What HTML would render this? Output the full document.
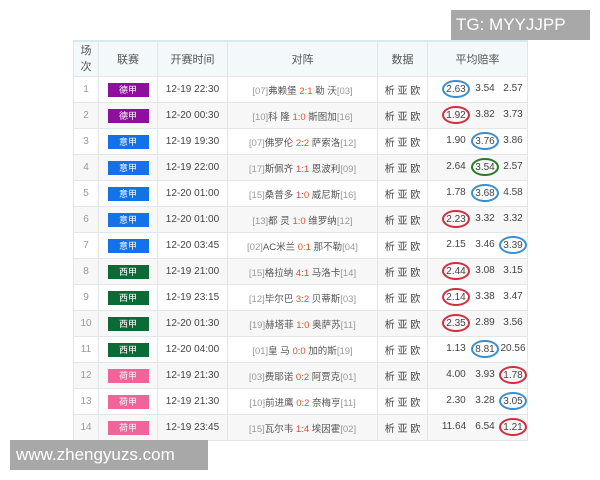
<!DOCTYPE html>
<html><head><meta charset="utf-8"><style>
body{margin:0;width:600px;height:480px;background:#fff;position:relative;overflow:hidden;font-family:"Liberation Sans","Noto Sans CJK SC",sans-serif;}
table{position:absolute;left:73px;top:40px;width:454px;border-collapse:collapse;table-layout:fixed;font-size:10px;color:#444;}
td,th{border:1px solid #e3e6e8;text-align:center;padding:0;height:25px;white-space:nowrap;overflow:hidden}
th{height:34px;background:#f3f8fb;font-weight:normal;font-size:11px;color:#555;border-top:2px solid #d8eaf0}
tr:nth-child(odd) td{background:#f7f7f7}
td.n{color:#999}
.b{display:inline-block;width:41px;height:14px;line-height:14px;color:#fff;font-size:9px}
.de{background:#8e0e9e}.yi{background:#1472e8}.xi{background:#0a6b36}.he{background:#f0649a}
.m{color:#555;font-size:9.5px}.m i{font-style:normal;color:#999}.m b{font-weight:normal;color:#e0502c}
.o{position:relative}
.o span{position:absolute;top:6px;width:30px;margin-left:-15px;text-align:center;font-size:10px;color:#444}
.o span.c{box-sizing:border-box;height:18px;top:3px;line-height:15px;border:2px solid;border-radius:50%;width:28px;margin-left:-14px}
.bl{border-color:#3a8fd0!important}.rd{border-color:#d03040!important}.gr{border-color:#2a7a2a!important}
.wm{position:absolute;background:#a8a8a8;color:#fff;font-size:17px}
</style></head><body>
<table>
<colgroup><col style="width:25px"><col style="width:59px"><col style="width:70px"><col style="width:150px"><col style="width:50px"><col style="width:100px"></colgroup>
<tr><th style="line-height:16px">场<br>次</th><th>联赛</th><th>开赛时间</th><th>对阵</th><th>数据</th><th>平均赔率</th></tr>
<tr><td class="n">1</td><td><span class="b de">德甲</span></td><td>12-19 22:30</td><td class="m"><i>[07]</i>弗赖堡 <b>2:1</b> 勒 沃<i>[03]</i></td><td>析 亚 欧</td><td class="o"><span class="c bl" style="left:28px">2.63</span><span style="left:57px">3.54</span><span style="left:85px">2.57</span></td></tr>
<tr><td class="n">2</td><td><span class="b de">德甲</span></td><td>12-20 00:30</td><td class="m"><i>[10]</i>科 隆 <b>1:0</b> 斯图加<i>[16]</i></td><td>析 亚 欧</td><td class="o"><span class="c rd" style="left:28px">1.92</span><span style="left:57px">3.82</span><span style="left:85px">3.73</span></td></tr>
<tr><td class="n">3</td><td><span class="b yi">意甲</span></td><td>12-19 19:30</td><td class="m"><i>[07]</i>佛罗伦 <b>2:2</b> 萨索洛<i>[12]</i></td><td>析 亚 欧</td><td class="o"><span style="left:28px">1.90</span><span class="c bl" style="left:57px">3.76</span><span style="left:85px">3.86</span></td></tr>
<tr><td class="n">4</td><td><span class="b yi">意甲</span></td><td>12-19 22:00</td><td class="m"><i>[17]</i>斯佩齐 <b>1:1</b> 恩波利<i>[09]</i></td><td>析 亚 欧</td><td class="o"><span style="left:28px">2.64</span><span class="c gr" style="left:57px">3.54</span><span style="left:85px">2.57</span></td></tr>
<tr><td class="n">5</td><td><span class="b yi">意甲</span></td><td>12-20 01:00</td><td class="m"><i>[15]</i>桑普多 <b>1:0</b> 威尼斯<i>[16]</i></td><td>析 亚 欧</td><td class="o"><span style="left:28px">1.78</span><span class="c bl" style="left:57px">3.68</span><span style="left:85px">4.58</span></td></tr>
<tr><td class="n">6</td><td><span class="b yi">意甲</span></td><td>12-20 01:00</td><td class="m"><i>[13]</i>都 灵 <b>1:0</b> 维罗纳<i>[12]</i></td><td>析 亚 欧</td><td class="o"><span class="c rd" style="left:28px">2.23</span><span style="left:57px">3.32</span><span style="left:85px">3.32</span></td></tr>
<tr><td class="n">7</td><td><span class="b yi">意甲</span></td><td>12-20 03:45</td><td class="m"><i>[02]</i>AC米兰 <b>0:1</b> 那不勒<i>[04]</i></td><td>析 亚 欧</td><td class="o"><span style="left:28px">2.15</span><span style="left:57px">3.46</span><span class="c bl" style="left:85px">3.39</span></td></tr>
<tr><td class="n">8</td><td><span class="b xi">西甲</span></td><td>12-19 21:00</td><td class="m"><i>[15]</i>格拉纳 <b>4:1</b> 马洛卡<i>[14]</i></td><td>析 亚 欧</td><td class="o"><span class="c rd" style="left:28px">2.44</span><span style="left:57px">3.08</span><span style="left:85px">3.15</span></td></tr>
<tr><td class="n">9</td><td><span class="b xi">西甲</span></td><td>12-19 23:15</td><td class="m"><i>[12]</i>毕尔巴 <b>3:2</b> 贝蒂斯<i>[03]</i></td><td>析 亚 欧</td><td class="o"><span class="c rd" style="left:28px">2.14</span><span style="left:57px">3.38</span><span style="left:85px">3.47</span></td></tr>
<tr><td class="n">10</td><td><span class="b xi">西甲</span></td><td>12-20 01:30</td><td class="m"><i>[19]</i>赫塔菲 <b>1:0</b> 奥萨苏<i>[11]</i></td><td>析 亚 欧</td><td class="o"><span class="c rd" style="left:28px">2.35</span><span style="left:57px">2.89</span><span style="left:85px">3.56</span></td></tr>
<tr><td class="n">11</td><td><span class="b xi">西甲</span></td><td>12-20 04:00</td><td class="m"><i>[01]</i>皇 马 <b>0:0</b> 加的斯<i>[19]</i></td><td>析 亚 欧</td><td class="o"><span style="left:28px">1.13</span><span class="c bl" style="left:57px">8.81</span><span style="left:85px">20.56</span></td></tr>
<tr><td class="n">12</td><td><span class="b he">荷甲</span></td><td>12-19 21:30</td><td class="m"><i>[03]</i>费耶诺 <b>0:2</b> 阿贾克<i>[01]</i></td><td>析 亚 欧</td><td class="o"><span style="left:28px">4.00</span><span style="left:57px">3.93</span><span class="c rd" style="left:85px">1.78</span></td></tr>
<tr><td class="n">13</td><td><span class="b he">荷甲</span></td><td>12-19 21:30</td><td class="m"><i>[10]</i>前进鹰 <b>0:2</b> 奈梅亨<i>[11]</i></td><td>析 亚 欧</td><td class="o"><span style="left:28px">2.30</span><span style="left:57px">3.28</span><span class="c bl" style="left:85px">3.05</span></td></tr>
<tr><td class="n">14</td><td><span class="b he">荷甲</span></td><td>12-19 23:45</td><td class="m"><i>[15]</i>瓦尔韦 <b>1:4</b> 埃因霍<i>[02]</i></td><td>析 亚 欧</td><td class="o"><span style="left:26px">11.64</span><span style="left:57px">6.54</span><span class="c rd" style="left:85px">1.21</span></td></tr>
</table>
<div class="wm" style="left:451px;top:10px;width:139px;height:30px;line-height:30px;padding-left:5px;box-sizing:border-box">TG: MYYJJPP</div>
<div class="wm" style="left:10px;top:440px;width:198px;height:30px;line-height:30px;padding-left:6px;box-sizing:border-box">www.zhengyuzs.com</div>
</body></html>
